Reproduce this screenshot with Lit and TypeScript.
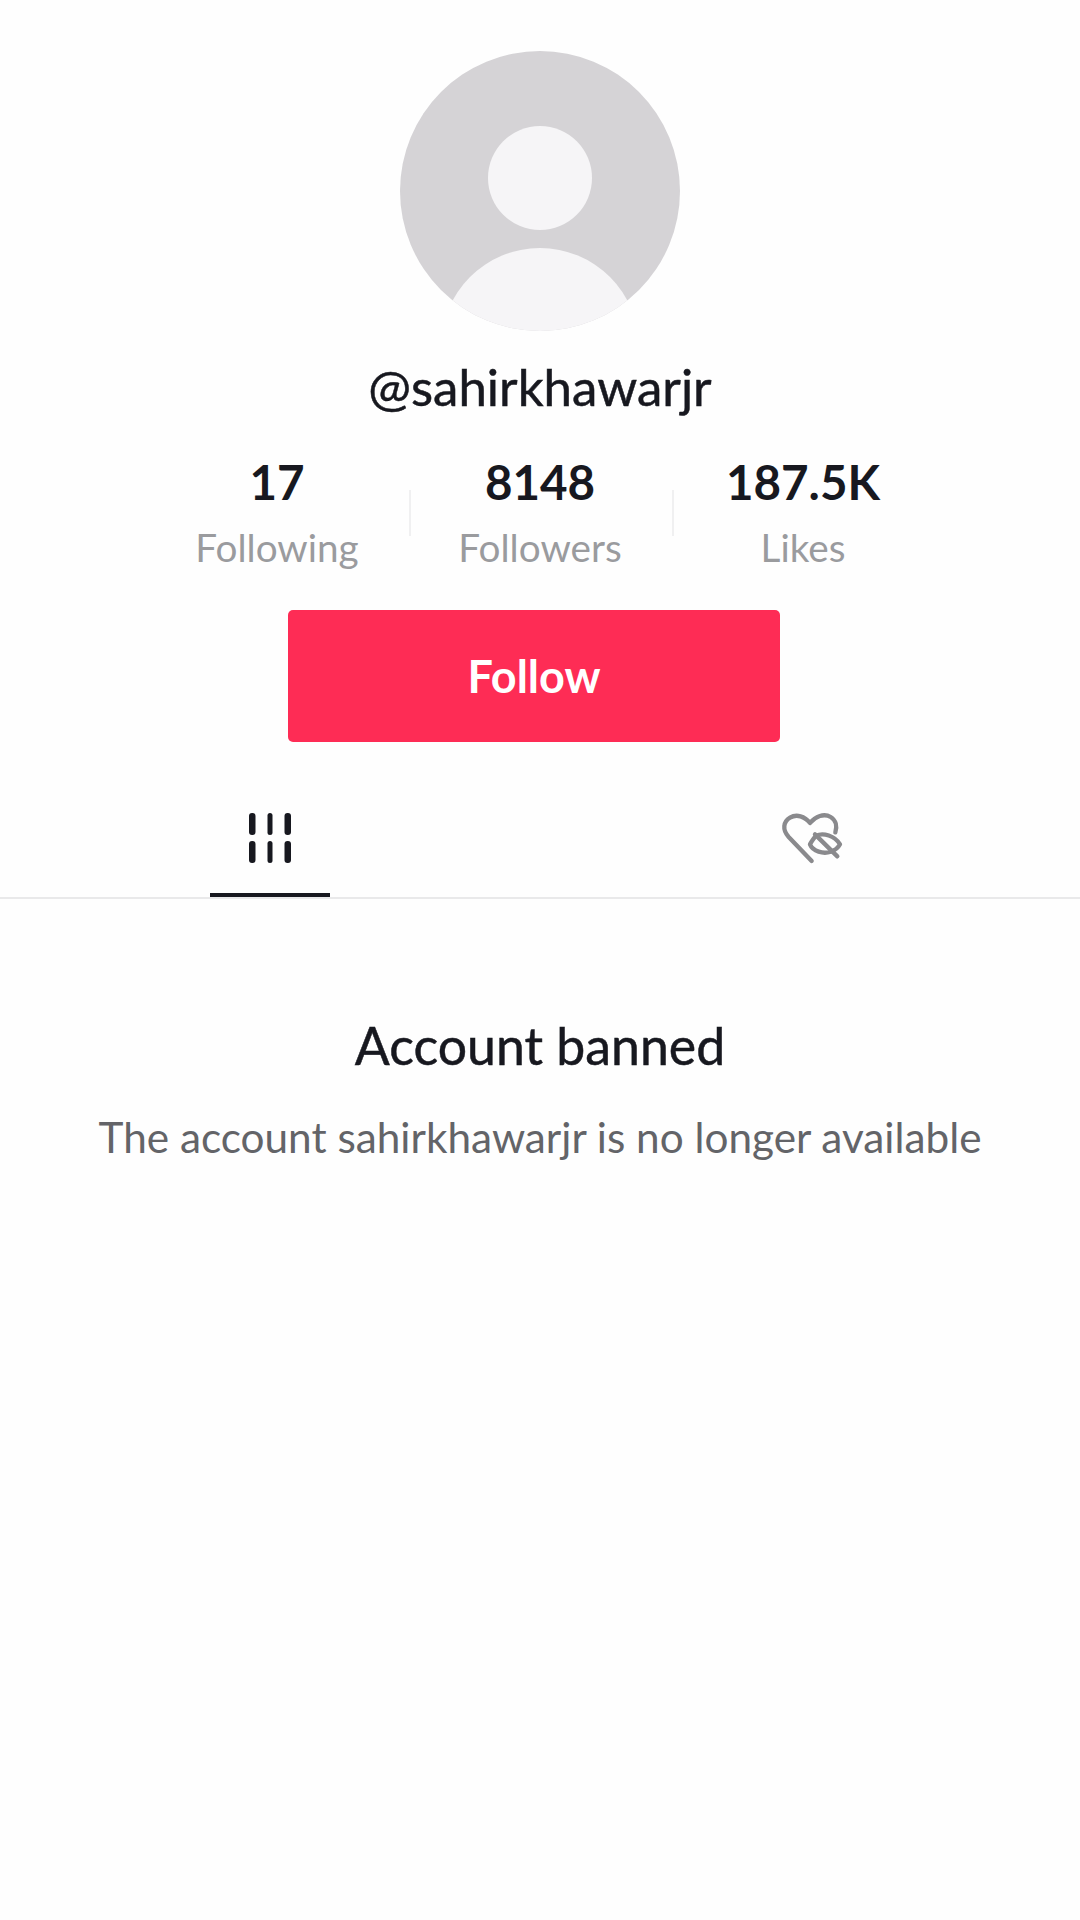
import { LitElement, html, css } from "lit";
import { customElement } from "lit/decorators.js";

@customElement("app-root")
export class AppRoot extends LitElement {
  static styles = css`
    :host { display: block; width: 1080px; height: 1920px; background: #fefefe; font-family: Lato, "Liberation Sans", sans-serif; overflow: hidden; }
    .page { display: flex; flex-direction: column; align-items: center; padding-top: 51px; }
    .avatar { display: block; width: 280px; height: 280px; }
    .name { margin-top: 29px; height: 54px; line-height: 54px; font-size: 51px; font-weight: 400; -webkit-text-stroke: 0.5px #17181f; color: #17181f; }
    .stats { margin-top: 38px; display: grid; grid-template-columns: 263px 263px 263px; height: 120px; }
    .stat { display: flex; flex-direction: column; align-items: center; position: relative; }
    .stat + .stat::before { content: ""; position: absolute; left: 0; top: 38px; width: 2px; height: 46px; background: #f0f0f1; }
    .num { height: 60px; line-height: 60px; font-size: 47.5px; font-weight: 700; color: #17181f; }
    .label { margin-top: 10px; height: 50px; line-height: 50px; font-size: 38.7px; color: #9a9b9e; }
    .follow { margin-top: 38px; margin-right: 12px; width: 492px; height: 132px; border-radius: 5px; background: #fe2c55; color: #fff; display: flex; align-items: center; justify-content: center; font-size: 45px; font-weight: 700; }
    .tabs { margin-top: 65px; width: 100%; height: 90px; display: grid; grid-template-columns: 540px 540px; border-bottom: 2px solid #e9e9ea; }
    .tab { display: flex; justify-content: center; align-items: flex-start; }
    .tab-a { justify-content: flex-start; padding-left: 210px; }
    .active { width: 120px; height: 90px; box-sizing: border-box; border-bottom: 4px solid #17181f; display: flex; justify-content: center; padding-top: 6px; }
    .grid-ic { display: block; width: 48px; height: 52px; }
    .heart-ic { display: block; width: 100px; height: 100px; margin-top: -16px; }
    .title { margin-top: 118px; height: 56px; line-height: 56px; font-size: 51.8px; font-weight: 400; -webkit-text-stroke: 0.5px #17181f; color: #17181f; }
    .sub { margin-top: 40px; height: 48px; line-height: 48px; font-size: 42.3px; color: #636468; }
  `;

  render() {
    return html`
      <div class="page">
        <svg class="avatar" viewBox="0 0 280 280">
          <defs><clipPath id="c"><circle cx="140" cy="140" r="140"></circle></clipPath></defs>
          <circle cx="140" cy="140" r="140" fill="#d5d3d6"></circle>
          <circle cx="140" cy="127" r="52" fill="#f6f5f7"></circle>
          <circle cx="140" cy="296" r="99" fill="#f6f5f7" clip-path="url(#c)"></circle>
        </svg>
        <div class="name">@sahirkhawarjr</div>
        <div class="stats">
          <div class="stat"><div class="num">17</div><div class="label">Following</div></div>
          <div class="stat"><div class="num">8148</div><div class="label">Followers</div></div>
          <div class="stat"><div class="num">187.5K</div><div class="label">Likes</div></div>
        </div>
        <div class="follow">Follow</div>
        <div class="tabs">
          <div class="tab tab-a">
            <div class="active">
              <svg class="grid-ic" viewBox="0 0 48 52">
                <g fill="#17181f">
                  <rect x="3" y="0" width="6.5" height="22" rx="3"></rect>
                  <rect x="21.5" y="0" width="5" height="22" rx="2.5"></rect>
                  <rect x="38.5" y="0" width="6.5" height="22" rx="3"></rect>
                  <rect x="3" y="28" width="6.5" height="22" rx="3"></rect>
                  <rect x="21.5" y="28" width="5" height="22" rx="2.5"></rect>
                  <rect x="38.5" y="28" width="6.5" height="22" rx="3"></rect>
                </g>
              </svg>
            </div>
          </div>
          <div class="tab">
            <svg class="heart-ic" viewBox="0 0 300 300">
              <g fill="none" stroke="#8a8a8d" stroke-width="13" stroke-linecap="round" stroke-linejoin="round">
                <path d="M155 210 L86 138 C66 116 70 92 90 80 C110 68 134 76 150 96 C166 76 192 66 212 78 C228 88 232 106 226 124"></path>
                <path d="M168 134 C190 124 224 134 240 160 C228 182 200 190 176 182 C164 178 154 170 150 160 C154 152 160 144 168 134 Z"></path>
                <path d="M165 130 L232 196"></path>
              </g>
            </svg>
          </div>
        </div>
        <div class="title">Account banned</div>
        <div class="sub">The account sahirkhawarjr is no longer available</div>
      </div>
    `;
  }
}
